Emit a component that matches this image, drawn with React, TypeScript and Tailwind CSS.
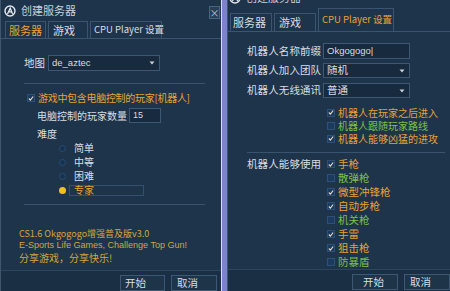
import React from "react";

const FONT = { fontFamily: '"Noto Sans CJK SC", "Liberation Sans", sans-serif' };

function Logo() {
  return (
    <svg width="12" height="12" viewBox="0 0 12 12" className="shrink-0">
      <circle cx="6" cy="6" r="5" fill="none" stroke="#e6e9ee" strokeWidth="1.4" />
      <path d="M3.5 9 L6.2 3.2 L8.6 9 M4.6 6.8 L7.8 6.8" fill="none" stroke="#e6e9ee" strokeWidth="1.3" />
    </svg>
  );
}

function Check({ on }: { on: boolean }) {
  return (
    <div className="w-[8px] h-[8px] bg-[#1c3a5e] border border-[#2c5078] flex items-center justify-center shrink-0">
      {on && (
        <svg width="7" height="7" viewBox="0 0 7 7">
          <path d="M1 3.5 L2.8 5.3 L6 1.2" fill="none" stroke="#e8dcc0" strokeWidth="1.3" />
        </svg>
      )}
    </div>
  );
}

function Radio({ on }: { on: boolean }) {
  return (
    <div
      className={
        on
          ? "w-[7px] h-[7px] rounded-full bg-[#f0c020] shrink-0"
          : "w-[7px] h-[7px] rounded-full bg-[#16324f] border border-[#2b4c70] shrink-0"
      }
    />
  );
}

function Arrow() {
  return (
    <svg width="6" height="4" viewBox="0 0 6 4" className="shrink-0">
      <path d="M0.5 0.5 L5.5 0.5 L3 3.5 Z" fill="#c8d0da" />
    </svg>
  );
}

export default function App() {
  return (
    <div className="w-[450px] h-[291px] overflow-hidden flex bg-[#1d3349] text-[#d8dde3]" style={FONT}>
      {/* LEFT WINDOW */}
      <div className="w-[221px] h-[291px] flex flex-col shrink-0 bg-[#1e344a] border-l border-[#3f566e]">
        {/* title bar */}
        <div className="h-[21px] flex items-center pl-[3px] shrink-0">
          <Logo />
          <span className="ml-[5px] text-[11px] leading-none text-[#c9d1da]">创建服务器</span>
          <div className="ml-auto mr-[1px] mt-[4px] w-[11px] h-[13px] border border-[#4a6480] bg-[#26405a] flex items-center justify-center text-[10px] leading-none text-[#b8c4d0]">
            ×
          </div>
        </div>
        {/* tabs */}
        <div className="h-[17px] flex items-end pl-[4px] gap-[2px] shrink-0">
          <div className="w-[41px] h-[17px] border-t border-x border-[#3b5571] flex items-center pl-[3px] text-[11px] leading-none text-[#e8a232]">
            服务器
          </div>
          <div className="w-[40px] h-[17px] border-t border-x border-[#3b5571] flex items-center pl-[4px] text-[11px] leading-none">
            游戏
          </div>
          <div className="w-[72px] h-[17px] border-t border-x border-[#3b5571] flex items-center pl-[3px] text-[9.5px] leading-none whitespace-nowrap">
            CPU Player 设置
          </div>
        </div>
        {/* body */}
        <div className="flex-1 border-t border-[#3b5571] flex flex-col text-[10px] leading-none">
          <div className="pl-[23px] mt-[16px] h-[16px] flex items-center">
            <span className="w-[24px] text-[10.5px]">地图</span>
            <div className="w-[112px] h-[16px] bg-[#172a3e] border border-[#3d5875] flex items-center pl-[3px] pr-[4px]">
              <span className="text-[9.5px]" style={{ fontFamily: '"Liberation Sans", sans-serif' }}>de_aztec</span>
              <div className="ml-auto"><Arrow /></div>
            </div>
          </div>
          <div className="ml-[23px] mt-[12px] w-[181px] h-px bg-[#3a5470]" />
          <div className="ml-[26px] mt-[8px] h-[12px] flex items-center gap-[3px]">
            <Check on={true} />
            <span className="text-[#e8a232] whitespace-nowrap tracking-[-0.3px]">游戏中包含电脑控制的玩家[机器人]</span>
          </div>
          <div className="ml-[36px] mt-[4px] h-[15px] flex items-center">
            <span className="w-[92px] whitespace-nowrap">电脑控制的玩家数量</span>
            <div className="w-[32px] h-[15px] bg-[#172a3e] border border-[#3d5875] flex items-center pl-[3px] text-[9px]" style={{ fontFamily: '"Liberation Sans", sans-serif' }}>
              15
            </div>
          </div>
          <div className="ml-[36px] mt-[5px] h-[12px] flex items-center">难度</div>
          <div className="ml-[58px] mt-[1px] flex flex-col">
            {[
              ["简单", false],
              ["中等", false],
              ["困难", false],
              ["专家", true],
            ].map(([t, on]) => (
              <div key={t as string} className="h-[14px] flex items-center">
                <Radio on={on as boolean} />
                {on ? (
                  <span className="ml-[3px] w-[75px] h-[11px] border border-[#34506c] flex items-center pl-[4px] text-[#e8a232]">{t as string}</span>
                ) : (
                  <span className="ml-[8px]">{t as string}</span>
                )}
              </div>
            ))}
          </div>
          <div className="ml-[23px] mt-[7px] w-[181px] h-px bg-[#3a5470]" />
          <div className="ml-[18px] mt-[22px] flex flex-col text-[#d6a43a] text-[9px]">
            <div className="h-[12px] flex items-center whitespace-nowrap">CS1.6 Okgogogo增强普及版v3.0</div>
            <div className="h-[12px] flex items-center whitespace-nowrap" style={{ fontFamily: '"Liberation Sans", sans-serif' }}>
              E-Sports Life Games, Challenge Top Gun!
            </div>
            <div className="h-[13px] flex items-center whitespace-nowrap text-[10px]">分享游戏，分享快乐!</div>
          </div>
          <div className="mt-auto h-[21px] border-t border-[#2d465f] bg-[#1b2f44] flex items-start justify-end pr-[4px] gap-[6px] pt-[4px]">
            <div className="w-[45px] h-[16px] border border-[#3d5875] bg-[#1e3449] flex items-center pl-[4px] text-[10.5px]">开始</div>
            <div className="w-[46px] h-[16px] border border-[#3d5875] bg-[#1e3449] flex items-center pl-[5px] text-[10.5px]">取消</div>
          </div>
        </div>
      </div>

      {/* separator */}
      <div className="w-px h-[291px] bg-[#d8dcf0] shrink-0" />
      <div className="w-[5px] h-[291px] bg-[#7c82cc] shrink-0" />

      {/* RIGHT WINDOW */}
      <div className="flex-1 h-[304px] -mt-[13px] flex flex-col bg-[#1e344a] border-l border-[#3f566e]">
        <div className="h-[21px] flex items-center pl-[1px] shrink-0">
          <Logo />
          <span className="ml-[5px] text-[11px] leading-none text-[#c9d1da]">创建服务器</span>
        </div>
        <div className="h-[23px] flex items-end pl-[2px] gap-[2px] shrink-0">
          <div className="w-[42px] h-[18px] border-t border-x border-[#3b5571] flex items-center pl-[2px] text-[11px] leading-none">
            服务器
          </div>
          <div className="w-[42px] h-[18px] border-t border-x border-[#3b5571] flex items-center pl-[4px] text-[11px] leading-none">
            游戏
          </div>
          <div className="w-[76px] h-[23px] border-t border-x border-[#3b5571] flex items-center pl-[3px] text-[9.5px] leading-none whitespace-nowrap text-[#e8a232]">
            CPU Player 设置
          </div>
        </div>
        <div className="flex-1 border-t border-[#3b5571] flex flex-col text-[10.5px] leading-none">
          <div className="ml-[19px] mt-[11px] h-[16px] flex items-center">
            <span className="w-[76px] whitespace-nowrap tracking-[0.1px]">机器人名称前缀</span>
            <div className="w-[87px] h-[16px] bg-[#172a3e] border border-[#3d5875] flex items-center pl-[3px] text-[9.5px]" style={{ fontFamily: '"Liberation Sans", sans-serif' }}>
              Okgogogo|
            </div>
          </div>
          <div className="ml-[19px] mt-[4px] h-[15px] flex items-center">
            <span className="w-[76px] whitespace-nowrap tracking-[0.1px]">机器人加入团队</span>
            <div className="w-[87px] h-[15px] bg-[#172a3e] border border-[#3d5875] flex items-center pl-[3px] pr-[4px]">
              <span>随机</span>
              <div className="ml-auto"><Arrow /></div>
            </div>
          </div>
          <div className="ml-[19px] mt-[5px] h-[15px] flex items-center">
            <span className="w-[76px] whitespace-nowrap tracking-[0.1px]">机器人无线通讯</span>
            <div className="w-[87px] h-[15px] bg-[#172a3e] border border-[#3d5875] flex items-center pl-[3px] pr-[4px]">
              <span>普通</span>
              <div className="ml-auto"><Arrow /></div>
            </div>
          </div>
          <div className="ml-[99px] mt-[8px] flex flex-col text-[10px]">
            {[
              ["机器人在玩家之后进入", true],
              ["机器人跟随玩家路线", false],
              ["机器人能够凶猛的进攻", true],
            ].map(([t, on]) => (
              <div key={t as string} className="h-[13px] flex items-center gap-[3px]">
                <Check on={on as boolean} />
                <span className={on ? "text-[#e8a232] whitespace-nowrap leading-[11px]" : "text-[#7cc048] whitespace-nowrap leading-[11px]"}>{t as string}</span>
              </div>
            ))}
          </div>
          <div className="ml-[19px] mt-[7px] w-[198px] h-px bg-[#3a5470]" />
          <div className="ml-[19px] mt-[4px] flex">
            <span className="w-[80px] h-[14px] flex items-center whitespace-nowrap tracking-[0.1px]">机器人能够使用</span>
            <div className="flex flex-col">
              {[
                ["手枪", true],
                ["散弹枪", false],
                ["微型冲锋枪", true],
                ["自动步枪", true],
                ["机关枪", false],
                ["手雷", true],
                ["狙击枪", true],
                ["防暴盾", false],
              ].map(([t, on]) => (
                <div key={t as string} className="h-[14px] flex items-center gap-[3px]">
                  <Check on={on as boolean} />
                  <span className={on ? "text-[#e8a232] whitespace-nowrap" : "text-[#7cc048] whitespace-nowrap"}>{t as string}</span>
                </div>
              ))}
            </div>
          </div>
          <div className="mt-auto h-[26px] border-t border-[#2d465f] bg-[#1b2f44] flex items-start pl-[124px] gap-[6px] pt-[4px]">
            <div className="w-[46px] h-[16px] border border-[#3d5875] bg-[#1e3449] flex items-center pl-[10px] text-[10.5px]">开始</div>
            <div className="w-[46px] h-[16px] border border-[#3d5875] bg-[#1e3449] flex items-center pl-[5px] text-[10.5px]">取消</div>
          </div>
        </div>
      </div>
    </div>
  );
}
